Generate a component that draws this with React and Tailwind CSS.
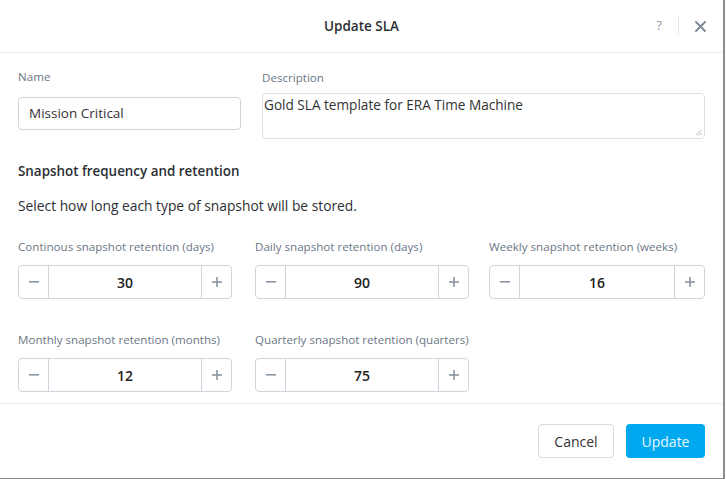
import React from "react";

function Stepper({ value }) {
  return (
    <div className="flex h-[34px] rounded-[4px] border border-[#cfd5dc] bg-white">
      <div className="flex w-[30px] items-center justify-center border-r border-[#cfd5dc] text-[#8a96a3]">
        <svg width="10" height="2" viewBox="0 0 10 2"><rect width="10" height="1.6" fill="#8a96a3" /></svg>
      </div>
      <div className="flex flex-1 items-center justify-center text-[14px] font-semibold text-[#222]">{value}</div>
      <div className="flex w-[30px] items-center justify-center border-l border-[#cfd5dc]">
        <svg width="10" height="10" viewBox="0 0 10 10"><rect y="4.2" width="10" height="1.6" fill="#8a96a3" /><rect x="4.2" width="1.6" height="10" fill="#8a96a3" /></svg>
      </div>
    </div>
  );
}

function Field({ label, value, w }) {
  return (
    <div className={`flex flex-col ${w}`}>
      <div className="mb-[11px] whitespace-nowrap text-[11.6px] leading-[14px] text-[#6b7785]">{label}</div>
      <Stepper value={value} />
    </div>
  );
}

export default function App() {
  return (
    <div className="h-[479px] w-[727px] bg-white" style={{ fontFamily: "'Open Sans', Lato, sans-serif" }}>
      <div className="flex h-[479px] w-[725px] flex-col border-r-2 border-b border-[#8c8c8c] bg-white">
        <div className="relative flex h-[53px] shrink-0 items-center justify-center border-b border-[#ececec]">
          <div className="text-[13.5px] font-semibold text-[#2b2f33]">Update SLA</div>
          <div className="absolute right-[17px] top-0 flex h-full items-center">
            <span className="text-[12.5px] text-[#8a96a3]">?</span>
            <div className="mx-[16px] h-[18px] w-px bg-[#e3e6ea]" />
            <svg width="11" height="11" viewBox="0 0 11 11">
              <path d="M1 1 L10 10 M10 1 L1 10" stroke="#7b8794" strokeWidth="1.8" strokeLinecap="round" />
            </svg>
          </div>
        </div>

        <div className="flex flex-1 flex-col px-[18px] pt-[17px]">
          <div className="flex gap-[21px]">
            <div className="flex w-[223px] flex-col">
              <div className="mb-[13px] text-[11.6px] leading-[14px] text-[#6b7785]">Name</div>
              <div className="flex h-[33px] items-center rounded-[4px] border border-[#cfd5dc] px-[10px] text-[13.5px] text-[#333]">Mission Critical</div>
            </div>
            <div className="flex flex-1 flex-col">
              <div className="mb-[8px] mt-[1px] text-[11.6px] leading-[14px] text-[#6b7785]">Description</div>
              <div className="relative h-[46px] rounded-[4px] border border-[#dde1e5] px-[1px] pt-[2px] text-[13.6px] leading-[18px] text-[#333]">
                Gold SLA template for ERA Time Machine
                <svg className="absolute bottom-[2px] right-[2px]" width="7" height="7" viewBox="0 0 7 7">
                  <path d="M6.5 1 L1 6.5 M6.5 4 L4 6.5" stroke="#9aa3ad" strokeWidth="0.8" />
                </svg>
              </div>
            </div>
          </div>

          <div className="mt-[23px] text-[13.4px] font-semibold leading-[18px] text-[#2b2f33]">Snapshot frequency and retention</div>
          <div className="mt-[17px] text-[13.8px] leading-[18px] text-[#2b2f33]">Select how long each type of snapshot will be stored.</div>

          <div className="mt-[25px] grid grid-cols-[217px_214px_216px] gap-x-[20px] gap-y-[34px]">
            <Field label="Continous snapshot retention (days)" value="30" w="w-[214px]" />
            <Field label="Daily snapshot retention (days)" value="90" w="w-[214px]" />
            <Field label="Weekly snapshot retention (weeks)" value="16" w="w-[216px]" />
            <Field label="Monthly snapshot retention (months)" value="12" w="w-[214px]" />
            <Field label="Quarterly snapshot retention (quarters)" value="75" w="w-[214px]" />
          </div>
        </div>

        <div className="flex h-[75px] shrink-0 items-center justify-end gap-[12px] border-t border-[#ececec] pr-[18px]">
          <button className="h-[34px] w-[76px] rounded-[4px] border border-[#d5dae0] bg-white text-[14px] text-[#333]">Cancel</button>
          <button className="h-[34px] w-[79px] rounded-[4px] bg-[#00a8f0] text-[14px] text-[#e6f6ff]">Update</button>
        </div>
      </div>
    </div>
  );
}
